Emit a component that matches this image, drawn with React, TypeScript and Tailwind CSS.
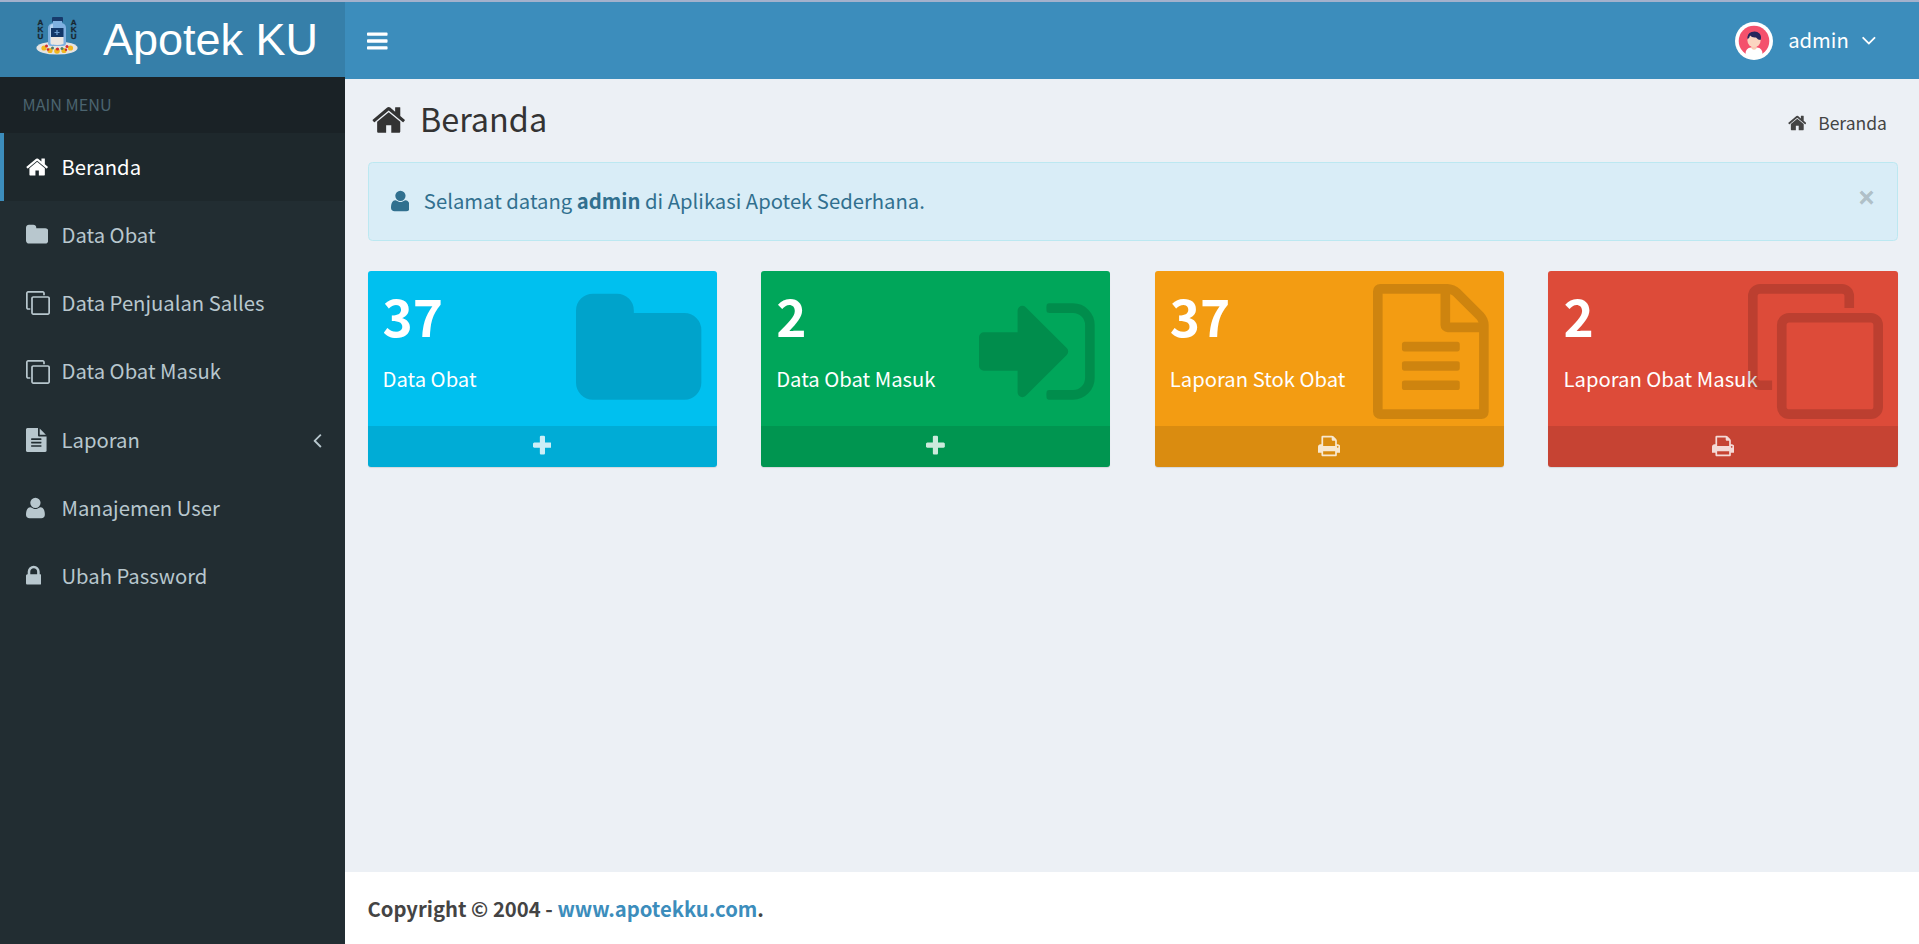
import type { ReactNode } from "react";

type Glyph = { box: string; d: string };

const glyphs = {
  home: {
    box: "64 0 1664 1792",
    d: "M1472 992v480q0 26-19 45t-45 19h-384v-384h-256v384h-384q-26 0-45-19t-19-45v-480q0-1 .5-3t.5-3l575-474 575 474q1 2 1 6zm223-69l-62 74q-8 9-21 11h-3q-13 0-21-7l-692-577-692 577q-12 8-24 7-13-2-21-11l-62-74q-8-10-7-23.5t11-21.5l719-599q32-26 76-26t76 26l244 204v-195q0-14 9-23t23-9h192q14 0 23 9t9 23v408l219 182q10 8 11 21.5t-7 23.5z",
  },
  folder: {
    box: "64 0 1664 1792",
    d: "M1728 608v704q0 92-66 158t-158 66h-1216q-92 0-158-66t-66-158v-960q0-92 66-158t158-66h320q92 0 158 66t66 158v32h672q92 0 158 66t66 158z",
  },
  clone: {
    box: "0 0 1792 1792",
    d: "M1664 1632v-1088q0-13-9.5-22.5t-22.5-9.5h-1088q-13 0-22.5 9.5t-9.5 22.5v1088q0 13 9.5 22.5t22.5 9.5h1088q13 0 22.5-9.5t9.5-22.5zm128-1088v1088q0 66-47 113t-113 47h-1088q-66 0-113-47t-47-113v-1088q0-66 47-113t113-47h1088q66 0 113 47t47 113zm-384-384v160h-128v-160q0-13-9.5-22.5t-22.5-9.5h-1088q-13 0-22.5 9.5t-9.5 22.5v1088q0 13 9.5 22.5t22.5 9.5h160v128h-160q-66 0-113-47t-47-113v-1088q0-66 47-113t113-47h1088q66 0 113 47t47 113z",
  },
  fileText: {
    box: "128 0 1536 1792",
    d: "M1596 476q14 14 28 36h-472v-472q22 14 36 28zm-476 164h544v1056q0 40-28 68t-68 28h-1344q-40 0-68-28t-28-68v-1600q0-40 28-68t68-28h800v544q0 40 28 68t68 28zm160 736v-64q0-14-9-23t-23-9h-704q-14 0-23 9t-9 23v64q0 14 9 23t23 9h704q14 0 23-9t9-23zm0-256v-64q0-14-9-23t-23-9h-704q-14 0-23 9t-9 23v64q0 14 9 23t23 9h704q14 0 23-9t9-23zm0-256v-64q0-14-9-23t-23-9h-704q-14 0-23 9t-9 23v64q0 14 9 23t23 9h704q14 0 23-9t9-23z",
  },
  fileTextO: {
    box: "128 0 1536 1792",
    d: "M1596 380q28 28 48 76t20 88v1152q0 40-28 68t-68 28h-1344q-40 0-68-28t-28-68v-1600q0-40 28-68t68-28h896q40 0 88 20t76 48zm-444-244v376h376q-10-29-22-41l-313-313q-12-12-41-22zm384 1528v-1024h-416q-40 0-68-28t-28-68v-416h-768v1536h1280zm-1024-864q0-14 9-23t23-9h704q14 0 23 9t9 23v64q0 14-9 23t-23 9h-704q-14 0-23-9t-9-23v-64zm736 224q14 0 23 9t9 23v64q0 14-9 23t-23 9h-704q-14 0-23-9t-9-23v-64q0-14 9-23t23-9h704zm0 256q14 0 23 9t9 23v64q0 14-9 23t-23 9h-704q-14 0-23-9t-9-23v-64q0-14 9-23t23-9h704z",
  },
  user: {
    box: "192 0 1408 1792",
    d: "M1600 1405q0 120-73 189.5t-194 69.5h-874q-121 0-194-69.5t-73-189.5q0-53 3.5-103.5t14-109 26.5-108.5 43-97.5 62-81 85.5-53.5 111.5-20q9 0 42 21.5t74.5 48 108 48 133.5 21.5 133.5-21.5 108-48 74.5-48 42-21.5q61 0 111.5 20t85.5 53.5 62 81 43 97.5 26.5 108.5 14 109 3.5 103.5zm-320-893q0 159-112.5 271.5t-271.5 112.5-271.5-112.5-112.5-271.5 112.5-271.5 271.5-112.5 271.5 112.5 112.5 271.5z",
  },
  lock: {
    box: "320 0 1152 1792",
    d: "M640 768h512v-192q0-106-75-181t-181-75-181 75-75 181v192zm832 96v576q0 40-28 68t-68 28h-960q-40 0-68-28t-28-68v-576q0-40 28-68t68-28h32v-192q0-184 132-316t316-132 316 132 132 316v192h32q40 0 68 28t28 68z",
  },
  bars: {
    box: "128 0 1536 1792",
    d: "M1664 1344v128q0 26-19 45t-45 19h-1408q-26 0-45-19t-19-45v-128q0-26 19-45t45-19h1408q26 0 45 19t19 45zm0-512v128q0 26-19 45t-45 19h-1408q-26 0-45-19t-19-45v-128q0-26 19-45t45-19h1408q26 0 45 19t19 45zm0-512v128q0 26-19 45t-45 19h-1408q-26 0-45-19t-19-45v-128q0-26 19-45t45-19h1408q26 0 45 19t19 45z",
  },
  plus: {
    box: "192 0 1408 1792",
    d: "M1600 736v192q0 40-28 68t-68 28h-416v416q0 40-28 68t-68 28h-192q-40 0-68-28t-28-68v-416h-416q-40 0-68-28t-28-68v-192q0-40 28-68t68-28h416v-416q0-40 28-68t68-28h192q40 0 68 28t28 68v416h416q40 0 68 28t28 68z",
  },
  print: {
    box: "64 0 1664 1792",
    d: "M448 1536h896v-256h-896v256zm0-640h896v-384h-160q-40 0-68-28t-28-68v-160h-640v640zm1152 64q0-26-19-45t-45-19-45 19-19 45 19 45 45 19 45-19 19-45zm128 0v416q0 13-9.5 22.5t-22.5 9.5h-224v160q0 40-28 68t-68 28h-960q-40 0-68-28t-28-68v-160h-224q-13 0-22.5-9.5t-9.5-22.5v-416q0-79 56.5-135.5t135.5-56.5h64v-544q0-40 28-68t68-28h672q40 0 88 20t76 48l152 152q28 28 48 76t20 88v256h64q79 0 135.5 56.5t56.5 135.5z",
  },
  signIn: {
    box: "128 0 1536 1792",
    d: "M1312 896q0 26-19 45l-544 544q-19 19-45 19t-45-19-19-45v-288h-448q-26 0-45-19t-19-45v-384q0-26 19-45t45-19h448v-288q0-26 19-45t45-19 45 19l544 544q19 19 19 45zm352-352v704q0 119-84.5 203.5t-203.5 84.5h-320q-13 0-22.5-9.5t-9.5-22.5q0-4-1-20t-.5-26.5 3-23.5 10-19.5 20.5-6.5h320q66 0 113-47t47-113v-704q0-66-47-113t-113-47h-312l-11.5-1-11.5-3-8-5.5-7-9-2-13.5q0-4-1-20t-.5-26.5 3-23.5 10-19.5 20.5-6.5h320q119 0 203.5 84.5t84.5 203.5z",
  },
  angleLeft: {
    box: "576 0 640 1792",
    d: "M1203 544q0 13-10 23l-393 393 393 393q10 10 10 23t-10 23l-50 50q-10 10-23 10t-23-10l-466-466q-10-10-10-23t10-23l466-466q10-10 23-10t23 10l50 50q10 10 10 23z",
  },
  angleDown: {
    box: "384 0 1024 1792",
    d: "M1395 736q0 13-10 23l-466 466q-10 10-23 10t-23-10l-466-466q-10-10-10-23t10-23l50-50q10-10 23-10t23 10l393 393 393-393q10-10 23-10t23 10l50 50q10 10 10 23z",
  },
} satisfies Record<string, Glyph>;

type IconName = keyof typeof glyphs;

function Icon({ name, className = "h-6" }: { name: IconName; className?: string }) {
  const g = glyphs[name];
  return (
    <svg viewBox={g.box} fill="currentColor" aria-hidden="true" className={`block w-auto shrink-0 ${className}`}>
      <path d={g.d} />
    </svg>
  );
}

function BrandMark() {
  return (
    <svg viewBox="0 0 42 40" className="h-10 w-[42px] shrink-0" aria-hidden="true">
      <ellipse cx="21" cy="32" rx="20.6" ry="6.6" fill="#e6e4e2" />
      <rect x="16" y="1" width="11" height="5" rx="1" fill="#173a6b" />
      <path d="M17 5h9v2q4 1 4 5v15q0 3-3 3H15q-3 0-3-3V12q0-4 5-5z" fill="#7fb0e0" />
      <path d="M14 11q0-3 3-3v21q-3 0-3-3z" fill="#b4d2f0" />
      <rect x="15" y="12" width="12.5" height="9" fill="#123768" />
      <path d="M21 14v5M18.500 16.500h5" stroke="#6d9fd2" strokeWidth="1.200" />
      <path d="M15 21h12.500v7q-6 2-12.500 0z" fill="#ece6e0" />
      <g fill="#f2b81f">
        <circle cx="8" cy="32" r="2.600" />
        <circle cx="14" cy="34.500" r="2.600" />
        <circle cx="21" cy="35" r="2.800" />
        <circle cx="28" cy="34.500" r="2.600" />
        <circle cx="34.500" cy="32" r="2.600" />
      </g>
      <g fill="#cf2b33">
        <circle cx="10.500" cy="30" r="1.500" />
        <circle cx="12" cy="33.500" r="1.300" />
        <circle cx="21.500" cy="33" r="1.600" />
        <circle cx="31" cy="30.500" r="1.500" />
        <circle cx="30" cy="33.800" r="1.200" />
      </g>
      <g fill="#4d7f6c">
        <circle cx="16.500" cy="32" r="1.500" />
        <circle cx="26" cy="32.500" r="1.500" />
      </g>
      <g
        fill="#18262f"
        stroke="#18262f"
        strokeWidth="0.3"
        fontFamily="'Liberation Sans', Arial, sans-serif"
        fontWeight="700"
        fontSize="8"
        textAnchor="middle"
      >
        <text x="4.500" y="9.300">A</text>
        <text x="4.500" y="16">K</text>
        <text x="4.500" y="22.700">U</text>
        <text x="37.700" y="9.300">A</text>
        <text x="37.700" y="16">K</text>
        <text x="37.700" y="22.700">U</text>
      </g>
    </svg>
  );
}

function Avatar() {
  return (
    <svg viewBox="0 0 38 38" className="h-[38px] w-[38px] shrink-0" aria-hidden="true">
      <circle cx="19" cy="19" r="19" fill="#fff" />
      <circle cx="19" cy="19" r="15.300" fill="#f4516c" />
      <path d="M10.500 32q0-6 5.500-6.500h6q5.500 .500 5.500 6.500l-3 4H14z" fill="#fff" />
      <path d="M16.500 22h5v4.500q-2.500 2.500-5 0z" fill="#f9c9b2" />
      <ellipse cx="19" cy="18.500" rx="6.600" ry="6.800" fill="#fbd5c1" />
      <path d="M12.500 17q-.500-5.500 4-7 5-1.500 8 1.500 2.500 3 1 6.500-2.500 0-4.500-2.500-4 .500-6-2-.500 3-2.500 3.500z" fill="#26265c" />
    </svg>
  );
}

const menu: { label: string; icon: IconName; active?: boolean; tree?: boolean }[] = [
  { label: "Beranda", icon: "home", active: true },
  { label: "Data Obat", icon: "folder" },
  { label: "Data Penjualan Salles", icon: "clone" },
  { label: "Data Obat Masuk", icon: "clone" },
  { label: "Laporan", icon: "fileText", tree: true },
  { label: "Manajemen User", icon: "user" },
  { label: "Ubah Password", icon: "lock" },
];

const cards: { value: string; label: string; icon: IconName; action: IconName; color: string }[] = [
  { value: "37", label: "Data Obat", icon: "folder", action: "plus", color: "bg-[#00c0ef]" },
  { value: "2", label: "Data Obat Masuk", icon: "signIn", action: "plus", color: "bg-[#00a65a]" },
  { value: "37", label: "Laporan Stok Obat", icon: "fileTextO", action: "print", color: "bg-[#f39c12]" },
  { value: "2", label: "Laporan Obat Masuk", icon: "clone", action: "print", color: "bg-[#dd4b39]" },
];

function Sidebar() {
  return (
    <aside className="flex w-[345px] shrink-0 flex-col bg-[#222d32]">
      <a className="flex h-[75px] items-start bg-[#367fa9] pl-9 pt-[14px] text-white">
        <BrandMark />
        <span className="ml-[25px] mt-[-1px] font-['Liberation_Sans',Arial,sans-serif] text-[45px] leading-[50px]">
          Apotek KU
        </span>
      </a>
      <div className="flex h-14 items-center bg-[#1a2226] pb-0.5 pl-[22.500px] text-[16.2px] text-[#4b646f]">
        MAIN MENU
      </div>
      <nav>
        {menu.map((m) => (
          <a
            key={m.label}
            className={`flex h-[68.2px] items-center border-l-4 pl-[22px] pr-[23px] ${
              m.active ? "border-[#3c8dbc] bg-[#1e282c] text-white" : "border-transparent text-[#b8c7ce]"
            }`}
          >
            <span className="flex w-[35.500px] shrink-0">
              <Icon name={m.icon} />
            </span>
            <span className="grow text-[20.25px]">{m.label}</span>
            {m.tree && <Icon name="angleLeft" />}
          </a>
        ))}
      </nav>
    </aside>
  );
}

function StatCard({ value, label, icon, action, color }: (typeof cards)[number]) {
  return (
    <div className={`relative overflow-hidden rounded-[3px] text-white shadow-[0_1px_1px_rgba(0,0,0,0.1)] ${color}`}>
      <div className="h-[155px] px-[15px] pt-[12px]">
        <h3 className="text-[51.3px] font-bold leading-[63px]">{value}</h3>
        <p className="mt-[17px] text-[20.25px] leading-[32px]">{label}</p>
      </div>
      <div className="absolute right-[15px] top-[13px] text-black/15">
        <Icon name={icon} className="h-[135px]" />
      </div>
      <a className="flex h-[41px] items-start justify-center bg-black/10 pt-2 text-white/80">
        <Icon name={action} />
      </a>
    </div>
  );
}

function Page({ children }: { children: ReactNode }) {
  return (
    <div className="flex h-[944px] flex-col overflow-hidden bg-[#ecf0f5] font-['Noto_Sans_CJK_SC',sans-serif] leading-normal text-[#333]">
      <div className="h-0.5 shrink-0 bg-[#a3b1cc]" />
      <div className="flex min-h-0 grow">{children}</div>
    </div>
  );
}

export default function App() {
  return (
    <Page>
      <Sidebar />
      <div className="flex grow flex-col">
        <header className="flex h-[77px] shrink-0 items-center bg-[#3c8dbc] pl-[22px] pr-[43.500px] text-white">
          <Icon name="bars" />
          <div className="ml-auto flex items-center">
            <Avatar />
            <span className="ml-[15px] text-[20.25px]">admin</span>
            <Icon name="angleDown" className="mb-0.5 ml-[13px] h-6" />
          </div>
        </header>

        <main className="grow pl-[22.500px] pr-[21.500px]">
          <div className="flex h-[83px] items-start justify-between">
            <h1 className="flex items-start pl-1 pt-[23px]">
              <Icon name="home" className="h-9" />
              <span className="ml-[15px] mt-[-4px] text-[32.4px] leading-[40px]">Beranda</span>
            </h1>
            <div className="flex items-center pr-[10.500px] pt-[30px] text-[17.550px] leading-[28px] text-[#444]">
              <Icon name="home" className="h-[20px]" />
              <span className="ml-3">Beranda</span>
            </div>
          </div>

          <div className="flex h-[79px] items-center rounded-[4.500px] border border-[#bce8f1] bg-[#d9edf7] pl-[22px] pr-[21px] text-[#31708f]">
            <Icon name="user" className="mb-0.5 h-6" />
            <p className="ml-[14.500px] text-[20.25px]">
              Selamat datang <strong>admin</strong> di Aplikasi Apotek Sederhana.
            </p>
            <button className="mb-[10px] ml-auto font-['Noto_Sans',sans-serif] text-[31.500px] font-bold leading-none text-black/20">
              ×
            </button>
          </div>

          <div className="mt-[30px] grid grid-cols-4 gap-[44.67px]">
            {cards.map((c) => (
              <StatCard key={c.label + c.value} {...c} />
            ))}
          </div>
        </main>

        <footer className="flex h-[72px] shrink-0 items-center bg-white pl-[22.500px] pt-[3px] text-[20.25px] font-bold text-[#444]">
          <p>
            Copyright © 2004 - <a className="text-[#3c8dbc]">www.apotekku.com</a>.
          </p>
        </footer>
      </div>
    </Page>
  );
}
